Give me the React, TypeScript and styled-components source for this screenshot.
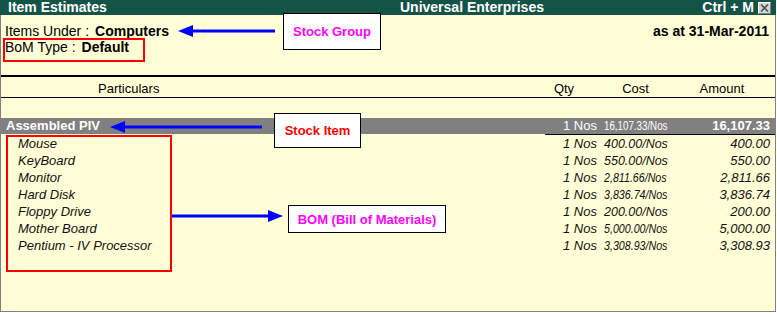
import styled, { createGlobalStyle } from 'styled-components';

const GlobalStyle = createGlobalStyle`
  html, body {
    margin: 0;
    padding: 0;
    background: #ffffff;
  }
  body {
    font-family: 'Liberation Sans', Arial, sans-serif;
    color: #000000;
  }
`;

const PAPER = '#fffed6';
const TITLE_GREEN = '#145447';

type Item = {
  name: string;
  qty: string;
  cost: string;
  squeeze: number;
  amount: string;
};

const assembled = {
  name: 'Assembled PIV',
  qty: '1 Nos',
  cost: '16,107.33/Nos',
  squeeze: 0.75,
  amount: '16,107.33',
};

const items: Item[] = [
  { name: 'Mouse', qty: '1 Nos', cost: '400.00/Nos', squeeze: 0.96, amount: '400.00' },
  { name: 'KeyBoard', qty: '1 Nos', cost: '550.00/Nos', squeeze: 0.96, amount: '550.00' },
  { name: 'Monitor', qty: '1 Nos', cost: '2,811.66/Nos', squeeze: 0.82, amount: '2,811.66' },
  { name: 'Hard Disk', qty: '1 Nos', cost: '3,836.74/Nos', squeeze: 0.82, amount: '3,836.74' },
  { name: 'Floppy Drive', qty: '1 Nos', cost: '200.00/Nos', squeeze: 0.96, amount: '200.00' },
  { name: 'Mother Board', qty: '1 Nos', cost: '5,000.00/Nos', squeeze: 0.82, amount: '5,000.00' },
  { name: 'Pentium - IV Processor', qty: '1 Nos', cost: '3,308.93/Nos', squeeze: 0.82, amount: '3,308.93' },
];

const Window = styled.div`
  position: relative;
  width: 776px;
  height: 312px;
  box-sizing: border-box;
  border: 1px solid #808080;
  border-top: none;
  background: ${PAPER};
`;

const TitleBar = styled.div`
  display: grid;
  grid-template-columns: 392px 1fr auto 13px;
  align-items: center;
  height: 15px;
  margin: 0 -1px;
  padding: 0 5px 0 8px;
  background: ${TITLE_GREEN};
  color: #ffffff;
  font-size: 14px;
  font-weight: bold;
  line-height: 15px;
  white-space: nowrap;
`;

const Shortcut = styled.span`
  margin-right: 4px;
`;

const CloseBox = styled.span`
  display: flex;
  align-items: center;
  justify-content: center;
  width: 13px;
  height: 12px;
  box-sizing: border-box;
  background: #d6d6d6;
  border: 1px solid #ffffff;
  border-right-color: #808080;
  border-bottom-color: #808080;
`;

const Header = styled.div`
  display: flex;
  justify-content: space-between;
  padding: 8px 6px 0 4px;
  height: 52px;
  font-size: 14px;
  line-height: 16px;
`;

const Field = styled.div`
  white-space: nowrap;
`;

const Value = styled.b`
  margin-left: 6px;
`;

const AsAt = styled.b`
  white-space: nowrap;
`;

const Rule = styled.div<{ $weight: number; $indent?: number }>`
  height: ${(p) => p.$weight}px;
  margin-left: ${(p) => p.$indent ?? 0}px;
  background: #000000;
`;

const Row = styled.div`
  display: grid;
  grid-template-columns: 1fr 66px 63px 96px;
  column-gap: 7px;
  padding: 0 5px 0 4px;
  font-size: 13px;
  white-space: nowrap;
`;

const ColumnHead = styled(Row)`
  padding-top: 4px;
  line-height: 16px;
  text-align: center;
`;

const ParticularsHead = styled.span`
  text-align: left;
  padding-left: 93px;
`;

const Spacer = styled.div`
  height: 20px;
`;

const StockRow = styled(Row)`
  height: 16px;
  line-height: 16px;
  background: #808080;
  color: #ffffff;
`;

const ItemRow = styled(Row)`
  height: 17px;
  line-height: 17px;
  font-style: italic;
  color: #111111;
`;

const Name = styled.span<{ $bold?: boolean }>`
  font-weight: ${(p) => (p.$bold ? 'bold' : 'normal')};
  padding-left: ${(p) => (p.$bold ? 1 : 13)}px;
`;

const Qty = styled.span`
  text-align: right;
`;

const CostCell = styled.span`
  overflow: visible;
`;

const Squeeze = styled.span<{ $scale: number }>`
  display: inline-block;
  transform: scaleX(${(p) => p.$scale});
  transform-origin: left center;
`;

const Amount = styled.span<{ $bold?: boolean }>`
  text-align: right;
  font-weight: ${(p) => (p.$bold ? 'bold' : 'normal')};
`;

/* annotation layer drawn over the report */

const Highlight = styled.div<{ $x: number; $y: number; $w: number; $h: number }>`
  position: absolute;
  left: ${(p) => p.$x}px;
  top: ${(p) => p.$y}px;
  width: ${(p) => p.$w}px;
  height: ${(p) => p.$h}px;
  box-sizing: border-box;
  border: 2px solid #ff0000;
  pointer-events: none;
`;

const Callout = styled.div<{ $x: number; $y: number; $w: number; $h: number; $color: string }>`
  position: absolute;
  left: ${(p) => p.$x}px;
  top: ${(p) => p.$y}px;
  width: ${(p) => p.$w}px;
  height: ${(p) => p.$h}px;
  box-sizing: border-box;
  display: flex;
  align-items: center;
  justify-content: center;
  background: #ffffff;
  border: 1px solid #000000;
  color: ${(p) => p.$color};
  font-size: 13px;
  font-weight: bold;
  white-space: nowrap;
`;

const ArrowSvg = styled.svg<{ $x: number; $y: number }>`
  position: absolute;
  left: ${(p) => p.$x}px;
  top: ${(p) => p.$y - 7}px;
`;

const Arrow = ({ x, y, length, toLeft }: { x: number; y: number; length: number; toLeft?: boolean }) => {
  const head = toLeft
    ? `0,7 15,1 15,13`
    : `${length},7 ${length - 15},1 ${length - 15},13`;
  const lineX = toLeft ? 12 : 0;
  return (
    <ArrowSvg $x={x} $y={y} width={length} height={14} viewBox={`0 0 ${length} 14`}>
      <rect x={lineX} y={5.5} width={length - 12} height={3} fill="#0000ff" />
      <polygon points={head} fill="#0000ff" />
    </ArrowSvg>
  );
};

const CloseGlyph = () => (
  <svg width="9" height="8" viewBox="0 0 9 8">
    <path d="M1 0.5 L8 7.5 M8 0.5 L1 7.5" stroke="#555555" strokeWidth="1.6" />
  </svg>
);

const App = () => (
  <>
    <GlobalStyle />
    <Window>
      <TitleBar>
        <span>Item Estimates</span>
        <span>Universal Enterprises</span>
        <Shortcut>Ctrl + M</Shortcut>
        <CloseBox>
          <CloseGlyph />
        </CloseBox>
      </TitleBar>

      <Header>
        <div>
          <Field>
            Items Under :<Value>Computers</Value>
          </Field>
          <Field>
            BoM Type :<Value>Default</Value>
          </Field>
        </div>
        <AsAt>as at 31-Mar-2011</AsAt>
      </Header>

      <Rule $weight={2} />
      <ColumnHead>
        <ParticularsHead>Particulars</ParticularsHead>
        <span>Qty</span>
        <span>Cost</span>
        <span>Amount</span>
      </ColumnHead>
      <Rule $weight={1} />
      <Spacer />

      <StockRow>
        <Name $bold>{assembled.name}</Name>
        <Qty>{assembled.qty}</Qty>
        <CostCell>
          <Squeeze $scale={assembled.squeeze}>{assembled.cost}</Squeeze>
        </CostCell>
        <Amount $bold>{assembled.amount}</Amount>
      </StockRow>
      <Rule $weight={1} $indent={544} />

      {items.map((item) => (
        <ItemRow key={item.name}>
          <Name>{item.name}</Name>
          <Qty>{item.qty}</Qty>
          <CostCell>
            <Squeeze $scale={item.squeeze}>{item.cost}</Squeeze>
          </CostCell>
          <Amount>{item.amount}</Amount>
        </ItemRow>
      ))}

      <Highlight $x={2} $y={38} $w={142} $h={24} />
      <Highlight $x={5} $y={135} $w={166} $h={137} />

      <Arrow x={177} y={31} length={97} toLeft />
      <Callout $x={282} $y={13} $w={98} $h={37} $color="#ff00ff">
        Stock Group
      </Callout>

      <Arrow x={109} y={127} length={152} toLeft />
      <Callout $x={273} $y={113} $w={87} $h={35} $color="#ff0000">
        Stock Item
      </Callout>

      <Arrow x={171} y={216} length={111} />
      <Callout $x={287} $y={205} $w={158} $h={28} $color="#ff00ff">
        BOM (Bill of Materials)
      </Callout>
    </Window>
  </>
);

export default App;
